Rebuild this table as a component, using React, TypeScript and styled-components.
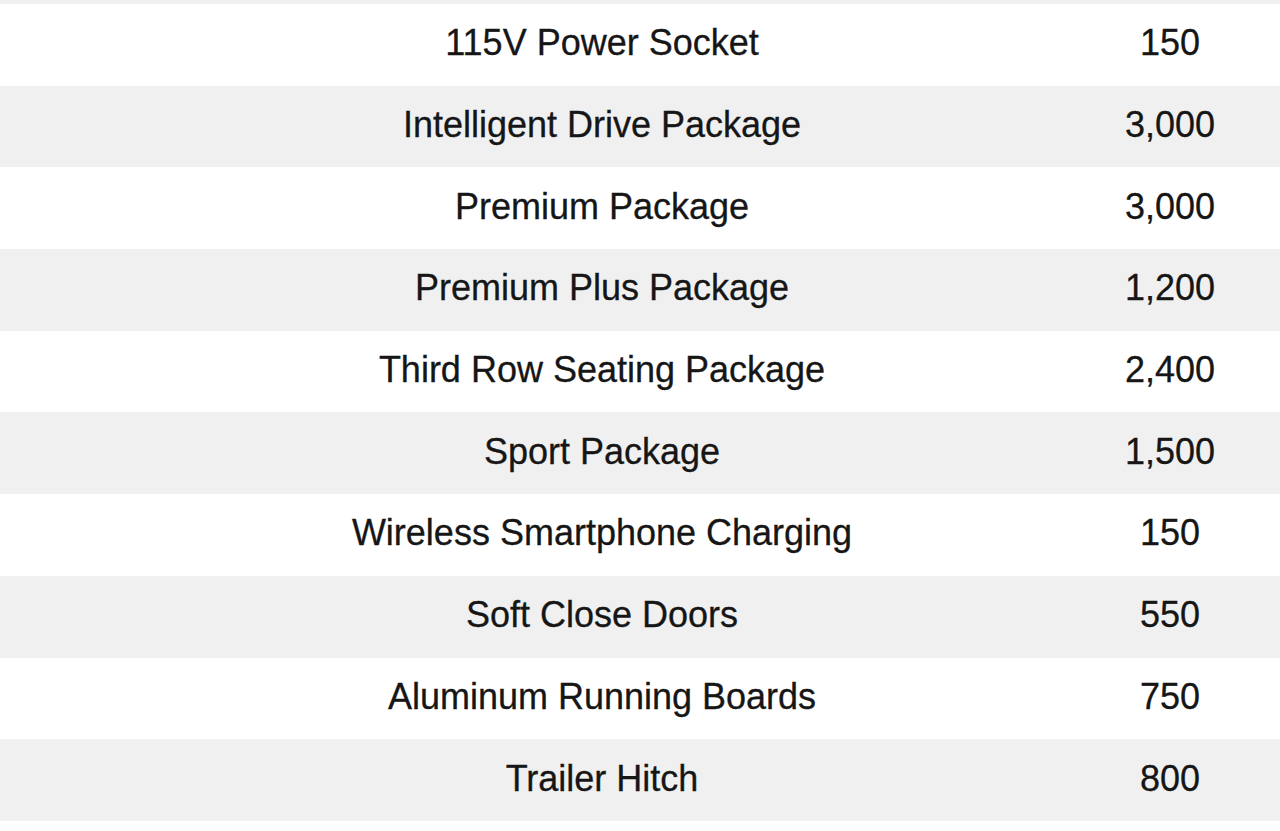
import React from 'react'
import styled, { createGlobalStyle } from 'styled-components'

type Option = {
  name: string
  price: string
}

const options: Option[] = [
  { name: '115V Power Socket', price: '150' },
  { name: 'Intelligent Drive Package', price: '3,000' },
  { name: 'Premium Package', price: '3,000' },
  { name: 'Premium Plus Package', price: '1,200' },
  { name: 'Third Row Seating Package', price: '2,400' },
  { name: 'Sport Package', price: '1,500' },
  { name: 'Wireless Smartphone Charging', price: '150' },
  { name: 'Soft Close Doors', price: '550' },
  { name: 'Aluminum Running Boards', price: '750' },
  { name: 'Trailer Hitch', price: '800' },
]

const App: React.FC = () => {
  return (
    <>
      <GlobalStyle />
      <Table>
        <TopStrip />
        {options.map((option, i) => (
          <Row key={option.name} striped={i % 2 === 1}>
            <NameCell>{option.name}</NameCell>
            <PriceCell>{option.price}</PriceCell>
          </Row>
        ))}
      </Table>
    </>
  )
}

export default App

const GlobalStyle = createGlobalStyle`
  html, body {
    margin: 0;
    padding: 0;
    background: #fff;
  }
  body {
    font-family: "Liberation Sans", Arial, sans-serif;
    color: #161616;
  }
`

const Table = styled.div`
  width: 1280px;
  height: 831px;
  overflow: hidden;
  background: #fff;
`

const TopStrip = styled.div`
  height: 4px;
  background: #f0f0f0;
`

const Row = styled.div<{ striped: boolean }>`
  display: grid;
  grid-template-columns: 1080px 200px;
  align-items: center;
  height: 81.7px;
  background: ${(p) => (p.striped ? '#f0f0f0' : '#fff')};
`

const Cell = styled.div`
  font-size: 36px;
  text-align: center;
  white-space: nowrap;
  padding-bottom: 3px;
  -webkit-text-stroke: 0.3px #161616;
`

const NameCell = styled(Cell)`
  padding-left: 124px;
`

const PriceCell = styled(Cell)`
  padding-right: 20px;
`
